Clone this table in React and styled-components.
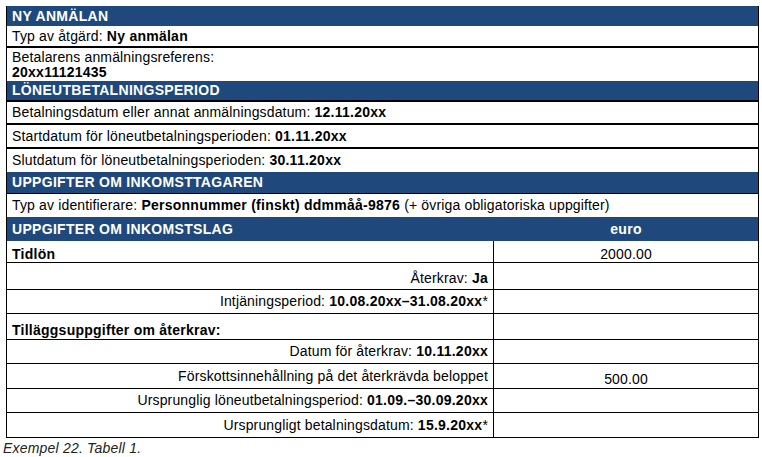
import styled, { createGlobalStyle } from 'styled-components';

const GlobalStyle = createGlobalStyle`
  body {
    margin: 0;
    padding: 6px 0 0 6px;
    background: #ffffff;
    font-family: "Liberation Sans", Arial, sans-serif;
    font-size: 14px;
    letter-spacing: 0.15px;
    color: #000000;
  }
  b {
    letter-spacing: 0.25px;
  }
`;

const Table = styled.div`
  width: 753px;
  box-sizing: border-box;
  border-left: 1px solid #000;
  border-right: 1px solid #000;
`;

const Row = styled.div`
  display: grid;
  grid-template-columns: ${(p) => (p.$split ? '487px 1fr' : '1fr')};
  height: ${(p) => p.$h}px;
  box-sizing: border-box;
  border-bottom: ${(p) => (p.$line === 0 ? 'none' : `${p.$line || 1}px solid #000`)};
  background: ${(p) => (p.$head ? '#1f497d' : '#fff')};
  color: ${(p) => (p.$head ? '#fff' : '#000')};
  font-weight: ${(p) => (p.$head ? 'bold' : 'normal')};
  letter-spacing: ${(p) => (p.$head ? '0.3px' : 'inherit')};
`;

const Cell = styled.div`
  display: flex;
  flex-direction: column;
  justify-content: ${(p) => (p.$bottom ? 'flex-end' : 'center')};
  align-items: ${(p) =>
    p.$align === 'right' ? 'flex-end' : p.$align === 'center' ? 'center' : 'flex-start'};
  padding: 0 5px ${(p) => p.$pb || 0}px 5px;
  line-height: 15px;
  white-space: nowrap;
  border-right: ${(p) => (p.$divider ? '1px solid #000' : 'none')};
`;

const Caption = styled.div`
  margin: 2px 0 0 -3px;
  font-style: italic;
  font-size: 14px;
  letter-spacing: 0.2px;
  color: #222;
`;

const App = () => (
  <>
    <GlobalStyle />
    <Table>
      <Row $head $h={20} $line={0}>
        <Cell>NY ANMÄLAN</Cell>
      </Row>
      <Row $h={22} $line={2}>
        <Cell>
          <span>
            Typ av åtgärd: <b>Ny anmälan</b>
          </span>
        </Cell>
      </Row>
      <Row $h={33} $line={0}>
        <Cell>
          <span>Betalarens anmälningsreferens:</span>
          <b>20xx11121435</b>
        </Cell>
      </Row>
      <Row $head $h={21} $line={2}>
        <Cell>LÖNEUTBETALNINGSPERIOD</Cell>
      </Row>
      <Row $h={23} $line={2}>
        <Cell>
          <span>
            Betalningsdatum eller annat anmälningsdatum: <b>12.11.20xx</b>
          </span>
        </Cell>
      </Row>
      <Row $h={24} $line={2}>
        <Cell>
          <span>
            Startdatum för löneutbetalningsperioden: <b>01.11.20xx</b>
          </span>
        </Cell>
      </Row>
      <Row $h={23} $line={0}>
        <Cell>
          <span>
            Slutdatum för löneutbetalningsperioden: <b>30.11.20xx</b>
          </span>
        </Cell>
      </Row>
      <Row $head $h={22} $line={1}>
        <Cell>UPPGIFTER OM INKOMSTTAGAREN</Cell>
      </Row>
      <Row $h={23} $line={0}>
        <Cell>
          <span>
            Typ av identifierare: <b>Personnummer (finskt) ddmmåå-9876</b> (+ övriga
            obligatoriska uppgifter)
          </span>
        </Cell>
      </Row>
      <Row $head $split $h={24} $line={0}>
        <Cell>UPPGIFTER OM INKOMSTSLAG</Cell>
        <Cell $align="center">euro</Cell>
      </Row>
      <Row $split $h={22}>
        <Cell $divider $bottom>
          <b>Tidlön</b>
        </Cell>
        <Cell $align="center" $bottom>
          2000.00
        </Cell>
      </Row>
      <Row $split $h={27}>
        <Cell $divider $align="right" $bottom $pb={3}>
          <span>
            Återkrav: <b>Ja</b>
          </span>
        </Cell>
        <Cell />
      </Row>
      <Row $split $h={24}>
        <Cell $divider $align="right">
          <span>
            Intjäningsperiod: <b>10.08.20xx–31.08.20xx</b>*
          </span>
        </Cell>
        <Cell />
      </Row>
      <Row $split $h={26}>
        <Cell $divider $bottom $pb={1}>
          <b>Tilläggsuppgifter om återkrav:</b>
        </Cell>
        <Cell />
      </Row>
      <Row $split $h={24}>
        <Cell $divider $align="right">
          <span>
            Datum för återkrav: <b>10.11.20xx</b>
          </span>
        </Cell>
        <Cell />
      </Row>
      <Row $split $h={25}>
        <Cell $divider $align="right">
          Förskottsinnehållning på det återkrävda beloppet
        </Cell>
        <Cell $align="center" $bottom $pb={1}>
          500.00
        </Cell>
      </Row>
      <Row $split $h={24}>
        <Cell $divider $align="right">
          <span>
            Ursprunglig löneutbetalningsperiod: <b>01.09.–30.09.20xx</b>
          </span>
        </Cell>
        <Cell />
      </Row>
      <Row $split $h={25}>
        <Cell $divider $align="right">
          <span>
            Ursprungligt betalningsdatum: <b>15.9.20xx</b>*
          </span>
        </Cell>
        <Cell />
      </Row>
    </Table>
    <Caption>Exempel 22. Tabell 1.</Caption>
  </>
);

export default App;
